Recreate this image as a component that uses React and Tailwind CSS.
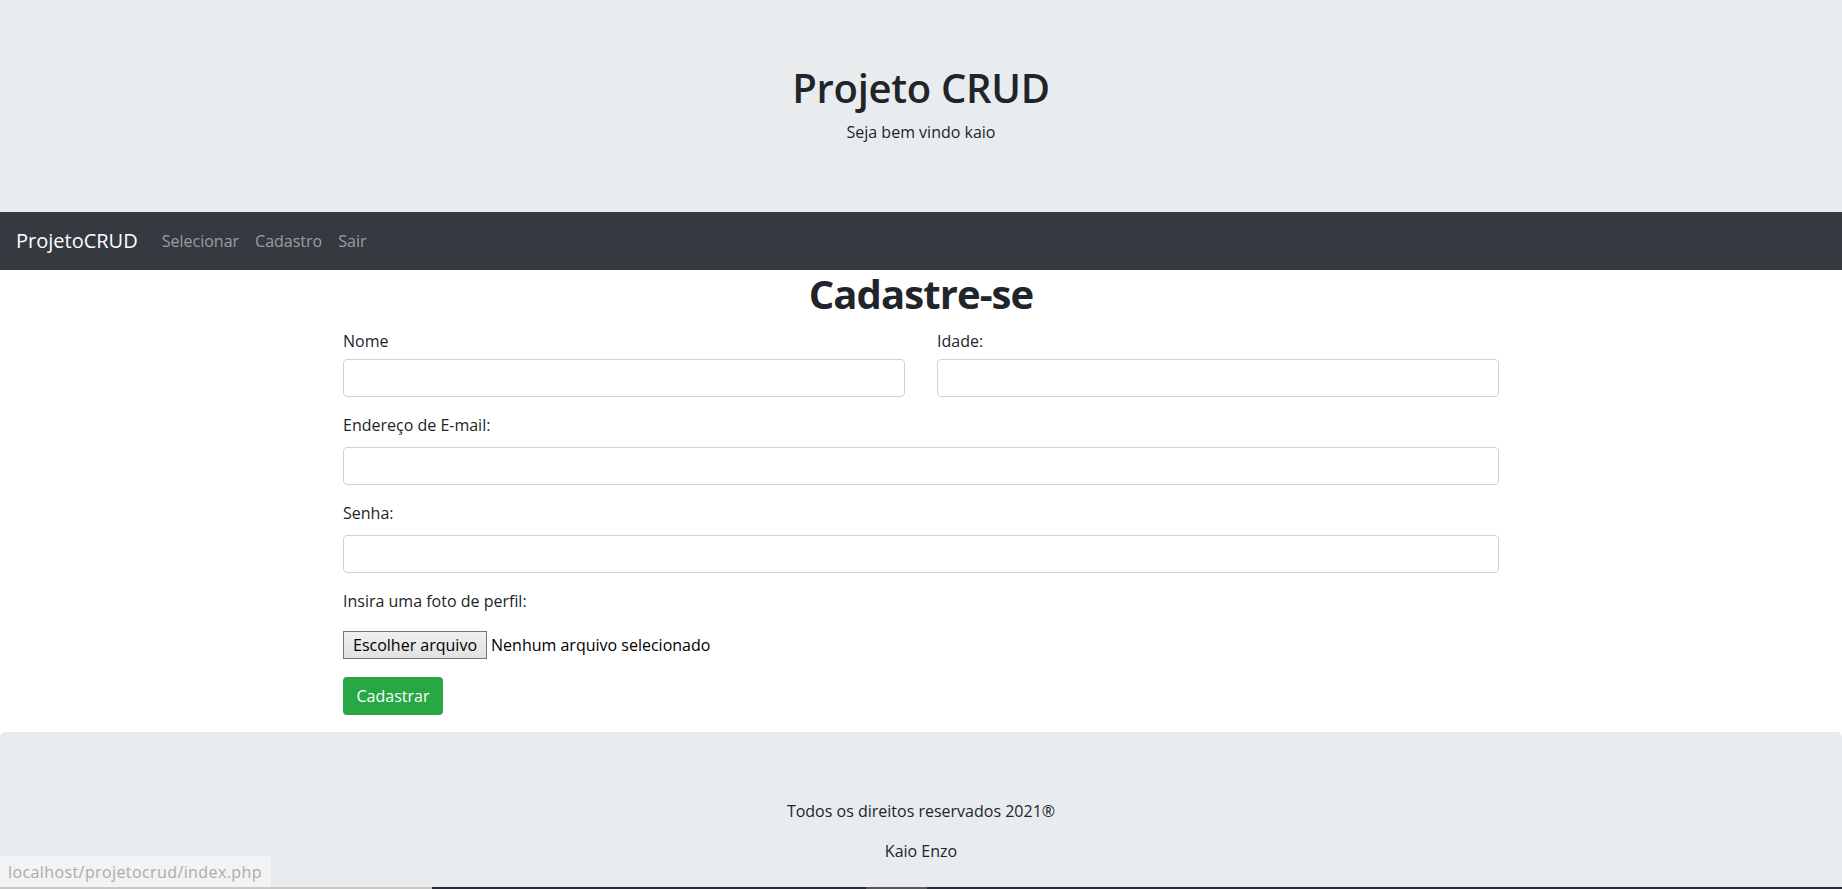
import React from 'react';

const font = { fontFamily: '"Open Sans", "Noto Sans", sans-serif' };

const inputCls = 'block w-full h-[38px] rounded-[4px] border border-[#ced4da] bg-white px-3 outline-none';

const Field = ({ label, className = '' }) => (
  <div className={className}>
    <label className="block h-[34px] leading-[24px] text-[16px] text-[#212529]">{label}</label>
    <input type="text" className={inputCls} />
  </div>
);

const App = () => {
  return (
    <div className="min-h-screen bg-white text-[#212529] relative" style={font}>
      {/* Jumbotron */}
      <header className="h-[212px] bg-[#e9ecef] flex flex-col items-center pt-[64px]">
        <h1 className="text-[40px] leading-[48px] font-semibold tracking-[-0.3px]">Projeto CRUD</h1>
        <p className="text-[16px] leading-[24px] mt-[8px]">Seja bem vindo kaio</p>
      </header>

      {/* Navbar */}
      <nav className="h-[58px] bg-[#343a40] flex items-center px-4">
        <a className="text-[20px] text-white mr-[24px]">ProjetoCRUD</a>
        <div className="flex items-center gap-[16px] text-[16px] text-white/50">
          <a>Selecionar</a>
          <a>Cadastro</a>
          <a>Sair</a>
        </div>
      </nav>

      {/* Form */}
      <main className="w-[1156px] mx-auto">
        <h2 className="text-center text-[40px] leading-[48px] font-bold tracking-[-0.9px]">Cadastre-se</h2>
        <div className="grid grid-cols-2 gap-x-[32px]">
          <div>
            <label className="block mt-[11px] h-[30px] leading-[24px] text-[16px]">Nome</label>
            <input type="text" className={inputCls} />
          </div>
          <div>
            <label className="block mt-[11px] h-[30px] leading-[24px] text-[16px]">Idade:</label>
            <input type="text" className={inputCls} />
          </div>
        </div>
        <Field label="Endereço de E-mail:" className="mt-[16px]" />
        <Field label="Senha:" className="mt-[16px]" />
        <label className="block mt-[16px] leading-[24px] text-[16px]">Insira uma foto de perfil:</label>
        <div className="flex items-center mt-[18px] h-[28px] text-[16px]">
          <span className="h-[28px] px-[9px] flex items-center border border-[#767676] bg-gradient-to-b from-[#f0f0f0] to-[#e1e1e1] text-black">
            Escolher arquivo
          </span>
          <span className="ml-[4px] text-black">Nenhum arquivo selecionado</span>
        </div>
        <button className="mt-[18px] h-[38px] w-[100px] rounded-[4px] bg-[#28a745] text-white text-[16px]">
          Cadastrar
        </button>
      </main>

      {/* Footer */}
      <footer className="mt-[17px] h-[200px] bg-[#e9ecef] rounded-t-[5px] flex flex-col items-center pt-[67px] text-[16px]">
        <p className="leading-[24px]">Todos os direitos reservados 2021®</p>
        <p className="leading-[24px] mt-[16px]">Kaio Enzo</p>
      </footer>

      {/* status bubble */}
      <div className="fixed left-0 top-[855px] h-[32px] w-[272px] bg-[#f1f3f5] text-[#ababab] text-[16px] tracking-[0.4px] leading-[32px] pl-[8px] border-t border-r border-[#e4e6e8]">
        localhost/projetocrud/index.php
      </div>
      <div className="fixed left-0 top-[887px] h-[2px] w-full flex">
        <div className="w-[432px] bg-[#c8c8c8]" />
        <div className="w-[434px] bg-[#2a2b3a]" />
        <div className="w-[61px] bg-[#58585c]" />
        <div className="flex-1 bg-[#2a2b3a]" />
      </div>
    </div>
  );
};

export default App;
